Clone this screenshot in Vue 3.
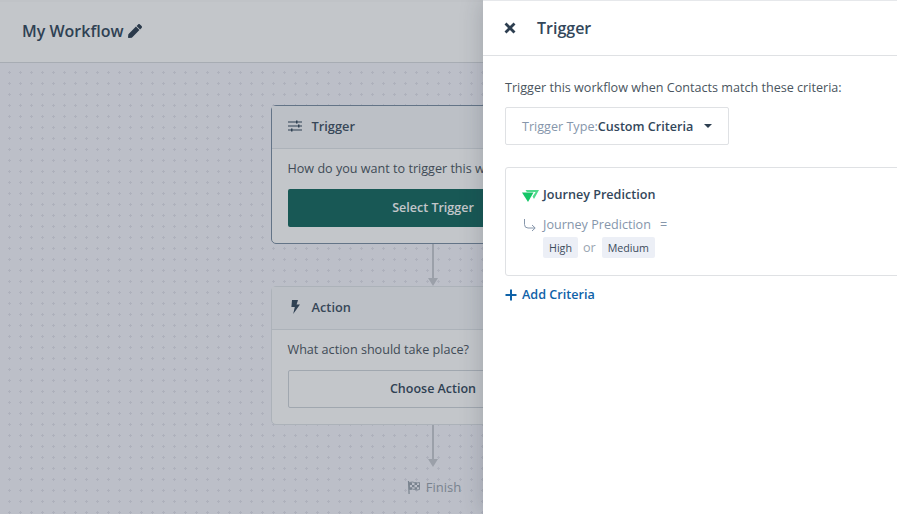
<script setup>
const matches = ['High', 'Medium']
</script>

<template>
  <div class="page">
    <header class="topbar">
      <span class="title">My Workflow</span>
      <svg class="pencil" viewBox="0 0 512 512" width="14" height="14">
        <path fill="currentColor" d="M290.7 93.2l128 128L141 498.9 26.9 511.5c-15.3 1.7-28.2-11.2-26.5-26.5l12.7-114.2L290.7 93.2zm207.2-19.1l-60-60c-18.7-18.7-49.1-18.7-67.9 0l-56.5 56.5 128 128 56.5-56.5c18.7-18.8 18.7-49.2-.1-68z" />
      </svg>
    </header>

    <main class="canvas">
      <section class="card active">
        <div class="card-head">
          <svg class="head-icon" viewBox="0 0 14 12" width="14" height="12">
            <g stroke="currentColor" fill="currentColor">
              <path d="M0 2h14M0 6h14M0 10h14" stroke-width="1" fill="none" />
              <rect x="8" y="0.5" width="1.5" height="3" stroke="none" />
              <rect x="10" y="4.5" width="1.5" height="3" stroke="none" />
              <rect x="3" y="8.5" width="1.5" height="3" stroke="none" />
            </g>
          </svg>
          <span>Trigger</span>
        </div>
        <div class="card-body">
          <p>How do you want to trigger this workflow?</p>
          <button class="btn primary">Select Trigger</button>
        </div>
      </section>

      <div class="connector"><i></i></div>

      <section class="card">
        <div class="card-head">
          <svg class="head-icon" viewBox="0 0 14 14" width="14" height="14">
            <path fill="currentColor" d="M4 0h6L8.6 4.6H12L5.2 14l1.6-7H3.4z" />
          </svg>
          <span>Action</span>
        </div>
        <div class="card-body">
          <p>What action should take place?</p>
          <button class="btn outline">Choose Action</button>
        </div>
      </section>

      <div class="connector"><i></i></div>

      <div class="finish">
        <svg viewBox="0 0 14 14" width="14" height="14">
          <path d="M1.5 1l.6 13" stroke="currentColor" stroke-width="1.2" />
          <path d="M2.5 2.5q3-1 5 0t5 0v7q-3 1-5 0t-5 0z" fill="none" stroke="currentColor" stroke-width="0.9" />
          <path fill="currentColor" d="M2.5 2.5h2.5v2.4H2.5zM7.5 2.5H10v2.4H7.5zM5 4.9h2.5v2.3H5zM10 4.9h2.5v2.3H10zM2.5 7.2H5v2.3H2.5zM7.5 7.2H10v2.3H7.5z" />
        </svg>
        <span>Finish</span>
      </div>
    </main>

    <div class="scrim"></div>

    <aside class="drawer">
      <div class="drawer-head">
        <svg class="close" viewBox="0 0 12 12" width="12" height="12">
          <path d="M1.5 1.5l9 9M10.5 1.5l-9 9" stroke="currentColor" stroke-width="2.8" />
        </svg>
        <h2>Trigger</h2>
      </div>

      <div class="drawer-body">
        <p class="lead">Trigger this workflow when Contacts match these criteria:</p>
        <div class="select">
          <span class="select-label">Trigger Type:</span>
          <span class="select-value">Custom Criteria</span>
          <i class="caret"></i>
        </div>

        <div class="criteria">
          <div class="criteria-name">
            <svg viewBox="0 0 17 13" width="17" height="13">
              <path fill="#14c566" d="M0 3.5h11.5L6 13z" />
              <path fill="#4fd98c" d="M3.5 1H17l-5 9-1.4-2.4L13.6 3H4.8z" />
            </svg>
            <strong>Journey Prediction</strong>
          </div>
          <div class="criteria-rule">
            <svg class="branch" viewBox="0 0 14 14" width="14" height="14">
              <path d="M1.5 1v5.5q0 3.5 3.5 3.5h7M9 7l3.2 3L9 13" fill="none" stroke="currentColor" stroke-width="1" />
            </svg>
            <span>Journey Prediction</span>
            <span class="eq">=</span>
          </div>
          <div class="tags">
            <template v-for="(m, i) in matches" :key="m">
              <span v-if="i > 0" class="or">or</span>
              <span class="tag">{{ m }}</span>
            </template>
          </div>
        </div>

        <a class="add">
          <svg viewBox="0 0 12 12" width="12" height="12">
            <path d="M6 .5v11M.5 6h11" stroke="currentColor" stroke-width="2" />
          </svg>
          Add Criteria
        </a>
      </div>
    </aside>
  </div>
</template>

<style>
html,
body {
  margin: 0;
  background: #fff;
}
</style>

<style scoped>
.page {
  position: relative;
  display: flex;
  flex-direction: column;
  width: 897px;
  height: 514px;
  overflow: hidden;
  font-family: "Open Sans", "Liberation Sans", sans-serif;
  color: #2d3e50;
  background-color: #f6f6fd;
  background-image: radial-gradient(#e2e2ec 1px, transparent 1.3px);
  background-size: 11px 11px;
  background-position: 4px 67px;
}

.topbar {
  display: flex;
  align-items: center;
  gap: 5px;
  flex: none;
  box-sizing: border-box;
  height: 63px;
  padding: 0 22px 3px;
  background: #fff;
  border-top: 2px solid #fbfbfb;
  border-bottom: 1px solid #d8dbe0;
}

.title {
  font-size: 16px;
  font-weight: 600;
  line-height: 22px;
  color: #33475b;
}

.canvas {
  display: flex;
  flex-direction: column;
  align-items: center;
  width: 866px;
  padding-top: 42px;
}

.card {
  flex: none;
  box-sizing: border-box;
  width: 325px;
  height: 139px;
  background: #fff;
  border: 1px solid #dfe3e8;
  border-radius: 5px;
}

.card.active {
  border-color: #7b8ea3;
}

.card-head {
  display: flex;
  align-items: center;
  box-sizing: border-box;
  height: 43px;
  padding: 0 0 2px 16px;
  border-bottom: 1px solid #dfe3e8;
  font-size: 12.8px;
  font-weight: 600;
  color: #3d4f62;
  background: #f6f7fa;
}

.card-head span {
  margin-left: 10px;
}

.head-icon {
  color: #33475b;
}

.card-body {
  padding: 11px 16px 0;
}

.card-body p {
  margin: 0 0 11px;
  font-size: 12.6px;
  line-height: 18px;
  color: #4a5560;
  white-space: nowrap;
}

.btn {
  display: block;
  box-sizing: border-box;
  width: 100%;
  height: 38px;
  padding-bottom: 2px;
  border-radius: 2px;
  font-family: inherit;
  font-size: 12.5px;
  font-weight: 600;
}

.btn.primary {
  background: #12675e;
  border: none;
  color: #fff;
}

.btn.outline {
  background: #fff;
  border: 1px solid #cfd4da;
  color: #33475b;
}

.connector {
  display: flex;
  flex-direction: column;
  align-items: center;
  flex: none;
  width: 10px;
  height: 42px;
  box-sizing: border-box;
}

.connector::before {
  content: "";
  flex: 1;
  width: 2px;
  background: #c8cbd2;
}

.connector i {
  width: 0;
  height: 0;
  border-left: 5px solid transparent;
  border-right: 5px solid transparent;
  border-top: 8px solid #c8cbd2;
}

.finish {
  display: flex;
  align-items: center;
  gap: 5px;
  margin: 11px 0 0 2px;
  font-size: 13px;
  font-weight: 500;
  color: #99a3ad;
}

.scrim {
  position: absolute;
  inset: 0;
  background: rgba(40, 50, 65, 0.28);
}

.drawer {
  position: absolute;
  top: 0;
  right: 0;
  bottom: 0;
  width: 414px;
  background: #fff;
  box-shadow: 0 0 22px rgba(30, 40, 55, 0.22);
}

.drawer-head {
  display: flex;
  align-items: center;
  box-sizing: border-box;
  height: 56px;
  padding-left: 21px;
  border-top: 1px solid #e6e8eb;
  border-bottom: 1px solid #dfe1e4;
}

.drawer-head h2 {
  margin: 0 0 0 21px;
  font-size: 16px;
  font-weight: 600;
  color: #33475b;
}

.close {
  color: #2d3e50;
}

.drawer-body {
  padding: 23px 0 0 22px;
}

.lead {
  margin: 0 0 10px;
  font-size: 12.6px;
  line-height: 18px;
  color: #4a5560;
  white-space: nowrap;
}

.select {
  display: flex;
  align-items: center;
  box-sizing: border-box;
  width: 224px;
  height: 38px;
  padding-left: 16px;
  border: 1px solid #dfe1e4;
  border-radius: 2px;
  font-size: 12.6px;
}

.select-label {
  color: #8696ab;
}

.select-value {
  font-weight: 600;
  color: #33475b;
}

.caret {
  margin-left: 11px;
  border-left: 4px solid transparent;
  border-right: 4px solid transparent;
  border-top: 4px solid #2d3e50;
}

.criteria {
  box-sizing: border-box;
  width: 420px;
  height: 109px;
  margin-top: 22px;
  padding: 18px 16px 0;
  border: 1px solid #dfe1e4;
  border-radius: 3px;
}

.criteria-name {
  display: flex;
  align-items: center;
  gap: 4px;
  font-size: 12.6px;
  line-height: 18px;
}

.criteria-name strong {
  font-weight: 600;
  color: #33475b;
}

.criteria-rule {
  display: flex;
  align-items: center;
  margin-top: 12px;
  font-size: 12.6px;
  line-height: 18px;
  color: #8696ab;
}

.branch {
  margin: 0 6px 0 1px;
  color: #8696ab;
}

.eq {
  margin-left: 9px;
}

.tags {
  display: flex;
  align-items: center;
  margin: 3px 0 0 21px;
}

.tag {
  padding: 1px 6px 0;
  font-size: 10.7px;
  font-weight: 500;
  line-height: 20px;
  color: #3d4c5c;
  background: #eceff6;
  border-radius: 2px;
}

.or {
  margin: 0 6px 0 5px;
  font-size: 12.6px;
  color: #9aa5b1;
}

.add {
  display: flex;
  align-items: center;
  gap: 5px;
  margin-top: 10px;
  font-size: 12.6px;
  font-weight: 600;
  line-height: 18px;
  color: #0f62a8;
}
</style>
